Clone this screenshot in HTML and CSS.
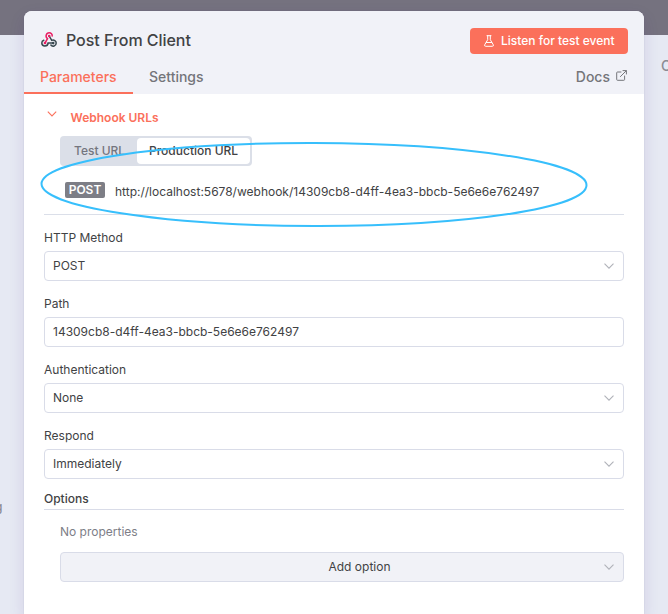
FILE: index.html
```html
<!DOCTYPE html>
<html lang="en">
<head>
<meta charset="utf-8">
<title>Post From Client</title>
<link rel="stylesheet" href="styles.css">
</head>
<body>
<div class="topbar"></div>
<span class="behind behind-right">C</span>
<span class="behind behind-left">g</span>
<main class="panel">
  <header class="header">
    <div class="title-row">
      <svg class="webhook" viewBox="0 0 16 15" fill="none" stroke-width="1.5" stroke-linecap="round">
        <path stroke="#37474f" d="M8.2 4 10.7 8.4C13 7.500 15.200 9 15.200 11c0 3.100-3.800 4.100-5.300 2"/>
        <path stroke="#37474f" d="M12.300 11.100H7.100c-.3 3.800-6.300 3.800-6.300 0C.8 9.700 1.700 8.700 2.800 8.300"/>
        <path stroke="#e91e63" d="M4 11 6.500 6.700C3.900 4.900 5.200.8 8.200.8c1.900 0 3.200 1.500 3 3.200"/>
        <circle cx="8.200" cy="4" r="1.300" fill="#e91e63"/><circle cx="4" cy="11" r="1.300" fill="#e91e63"/><circle cx="12.200" cy="11.100" r="1.300" fill="#37474f"/>
      </svg>
      <h1 class="title">Post From Client</h1>
      <button class="listen">
        <svg class="flask" viewBox="0 0 10 12" fill="none" stroke="currentColor" stroke-linecap="round" stroke-linejoin="round"><path d="M3 .7h4M3.700.7v4L.7 9.800q-.5 1.500 1 1.500h6.600q1.500 0 1-1.500l-3-5.100v-4M2.400 7.500h5.200"/></svg>
        <span>Listen for test event</span>
      </button>
    </div>
    <nav class="tabs">
      <a class="tab active">Parameters</a>
      <a class="tab">Settings</a>
      <a class="tab docs">Docs
        <svg class="external" viewBox="0 0 11 11" fill="none" stroke="currentColor" stroke-linecap="round" stroke-linejoin="round"><path d="M5 2H1.500q-.8 0-.8.8v6.700q0 .8.8.8h6.300q.8 0 .8-.8V6M7 .6h3.400V4M10.200.8 4.400 6.600"/></svg>
      </a>
    </nav>
  </header>
  <section class="body">
    <div class="webhooks">
      <div class="section-head">
        <svg class="chevron" viewBox="0 0 10 6"><path d="M.8.7 5 4.900 9.200.7"/></svg>
        <span>Webhook URLs</span>
      </div>
      <div class="switch"><span class="choice">Test URL</span><span class="choice chosen">Production URL</span></div>
      <div class="url-row"><span class="badge">POST</span><span class="url">http://localhost:5678/webhook/14309cb8-d4ff-4ea3-bbcb-5e6e6e762497</span></div>
    </div>
    <div class="field"><label>HTTP Method</label>
      <div class="input">POST<svg class="chevron" viewBox="0 0 10 6"><path d="M.5.6 5 5.100 9.500.6"/></svg></div></div>
    <div class="field"><label>Path</label>
      <div class="input">14309cb8-d4ff-4ea3-bbcb-5e6e6e762497</div></div>
    <div class="field"><label>Authentication</label>
      <div class="input">None<svg class="chevron" viewBox="0 0 10 6"><path d="M.5.6 5 5.100 9.500.6"/></svg></div></div>
    <div class="field"><label>Respond</label>
      <div class="input">Immediately<svg class="chevron" viewBox="0 0 10 6"><path d="M.5.6 5 5.100 9.500.6"/></svg></div></div>
    <div class="options-title">Options</div>
    <div class="options">
      <div class="empty">No properties</div>
      <div class="input add"><span>Add option</span><svg class="chevron" viewBox="0 0 10 6"><path d="M.5.6 5 5.100 9.500.6"/></svg></div>
    </div>
  </section>
</main>
<svg class="highlight" viewBox="0 0 548 88"><ellipse cx="274" cy="43.500" rx="272.500" ry="41.500" transform="rotate(.15 274 44)"/></svg>
</body>
</html>
```
FILE: styles.css
```css
* { box-sizing: border-box; }
body {
  margin: 0;
  height: 614px;
  overflow: hidden;
  position: relative;
  background: #e6e9f3;
  color: #414244;
  font: 12px/16px Inter, "Liberation Sans", sans-serif;
}
.topbar { height: 35px; background: #75727f; }
.behind { position: absolute; color: #8b8c94; font-size: 14px; font-weight: 500; }
.behind-right { left: 661px; top: 58px; }
.behind-left { left: -5px; top: 499px; font-size: 12px; }
.panel {
  position: absolute;
  left: 24px;
  top: 11px;
  width: 620px;
  height: 603px;
  border-radius: 8px 8px 0 0;
  background: #fff;
  box-shadow: 0 6px 16px rgba(68, 28, 128, .12), 0 0 1px rgba(60, 60, 90, .3);
}
.header { height: 83px; background: #f1f2f8; border-radius: 8px 8px 0 0; display: flex; flex-direction: column; }
.title-row { display: flex; align-items: center; height: 59px; padding: 0 16px 0 17px; }
.webhook { width: 16px; height: 15px; margin-bottom: 2px; }
.title { margin: 0 auto 2px 9px; font-size: 16px; line-height: 20px; font-weight: 500; letter-spacing: -.04px; }
.listen {
  display: flex;
  align-items: center;
  gap: 7px;
  width: 158px;
  height: 26px;
  padding: 0 0 0 14px;
  border: 0;
  border-radius: 4px;
  background: #fb705b;
  color: #fff;
  font: 500 12px/16px Inter, sans-serif;
  white-space: nowrap;
}
.flask { width: 10px; height: 12px; }
.tabs { display: flex; height: 24px; gap: 16px; }
.tab { font-size: 14px; line-height: 14px; font-weight: 500; color: #74757a; }
.active { width: 109px; padding-left: 16px; color: #fb705b; border-bottom: 2px solid #fb705b; }
.docs { display: flex; gap: 6px; margin-left: auto; padding-right: 17px; }
.external { width: 11px; height: 11px; }
.body { padding: 14px 20px; }
.webhooks { height: 107px; border-bottom: 1px solid #dbdfe9; }
.section-head { display: flex; gap: 13.5px; padding-left: 3px; height: 28px; color: #fb705b; font-weight: 600; line-height: 19px; }
.chevron { width: 10px; height: 6px; fill: none; stroke: #b0b2b9; stroke-width: 1.1; }
.section-head .chevron { margin-top: 3px; stroke: #fb705b; }
.switch { display: flex; width: 192px; height: 30px; margin-left: 16px; padding: 2px; border-radius: 4px; background: #dbdfe8; }
.choice { width: 75px; line-height: 26px; padding-left: 12px; font-weight: 500; color: #74757e; white-space: nowrap; }
.chosen { width: 113px; border-radius: 4px; background: #fff; color: #414244; }
.url-row { display: flex; gap: 10px; padding: 16px 0 0 21px; }
.badge { width: 40px; height: 16px; border-radius: 2px; background: #7d7e86; color: #fff; font-weight: 600; line-height: 16px; text-align: center; }
.url { padding-top: 2px; white-space: nowrap; }
.field { height: 66px; padding-top: 15px; }
.field label { display: block; height: 21px; font-weight: 400; }
.input { display: flex; align-items: center; justify-content: space-between; height: 30px; padding: 0 9px 0 8px; border: 1px solid #d9dce8; border-radius: 4px; background: #fff; }
.options-title { margin-top: 12px; height: 19px; border-bottom: 1px solid #d9dce8; font-weight: 500; }
.options { padding: 14px 0 0 16px; }
.empty { height: 28px; color: #7d7e87; }
.add { background: #f1f2f7; }
.add span { flex: 1; padding-left: 46px; text-align: center; }
.highlight { position: absolute; left: 40px; top: 141px; width: 548px; height: 88px; fill: none; stroke: #37bffc; stroke-width: 2; }
```
